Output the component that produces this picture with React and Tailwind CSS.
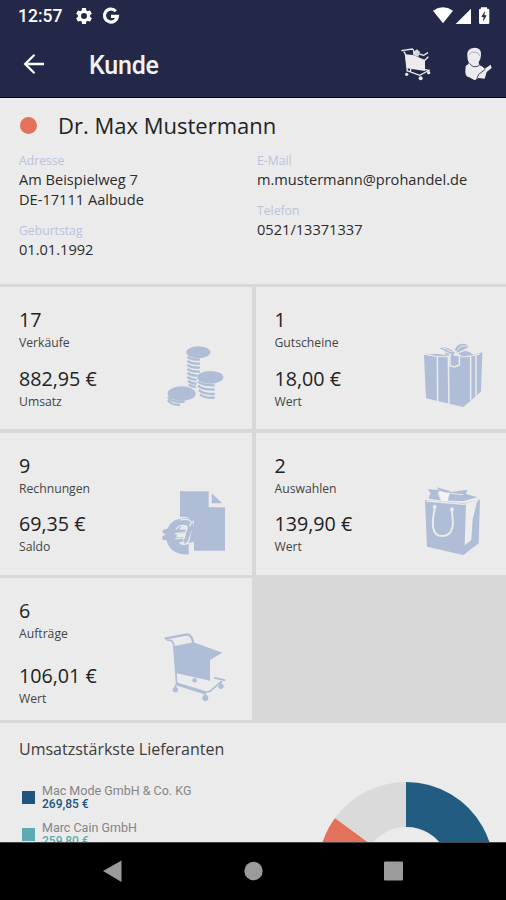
import React from 'react';

const customer = {
  name: 'Dr. Max Mustermann',
  street: 'Am Beispielweg 7',
  city: 'DE-17111 Aalbude',
  birthday: '01.01.1992',
  email: 'm.mustermann@prohandel.de',
  phone: '0521/13371337',
};

const suppliers = [
  { name: 'Mac Mode GmbH & Co. KG', value: '269,85 €', box: 'bg-[#1d5480]', text: 'text-[#1d5480]' },
  { name: 'Marc Cain GmbH', value: '259,80 €', box: 'bg-[#5cabb0]', text: 'text-[#5cabb0]' },
];

function CoinsIcon() {
  return (
    <svg viewBox="480 165 216 216" className="size-[72px]" fill="#afbdd6">
      <ellipse cx="595" cy="202" rx="36" ry="18" />
      <ellipse cx="631" cy="277" rx="39" ry="19" />
      <ellipse cx="545" cy="326" rx="42" ry="22" />
      <g fill="none" stroke="#afbdd6" strokeWidth="7">
        <path d="M562 216q14 9 38 8M562 228q14 9 38 8M562 240q14 9 38 8M562 252q14 9 38 8M562 264q12 9 31 8M562 276q12 9 28 8M564 288q10 8 26 8M566 299q9 7 22 7" />
        <path d="M594 290q14 12 50 11M594 302q14 13 50 12M596 315q14 13 48 12M600 328q14 12 44 10" />
        <path d="M504 336q8 17 50 14M504 345q10 16 36 14" />
      </g>
    </svg>
  );
}

function GiftIcon() {
  return (
    <svg viewBox="510 165 216 216" className="size-[72px]">
      <g fill="#afbdd6">
        <path d="M522 210L560 206L598 212L662 213L697 202L693 320L640 366L528 340Z" />
        <path d="M568 190Q590 182 614 202L610 214L584 208Q596 200 568 190Z" />
        <path d="M614 196Q620 172 648 177Q662 186 644 195L622 204Z" />
        <path d="M624 206Q644 192 662 203L672 210L640 214Z" />
      </g>
      <g fill="none" stroke="#ebebeb" strokeWidth="4.500">
        <path d="M562 213L563 350M595 216L597 358M662 216V346M678 209V334" />
        <path d="M530 210Q566 217 600 215M632 216Q660 217 690 207" strokeWidth="3" />
        <path d="M600 208V242L614 246L628 240V210" />
        <path d="M574 196L604 208M578 188L606 201M622 196Q632 178 652 184M624 204L650 190M608 200Q616 194 622 202" strokeWidth="3" />
      </g>
    </svg>
  );
}

function InvoiceIcon() {
  return (
    <svg viewBox="480 165 216 216" className="size-[72px]">
      <path d="M540 184H626V232H675V362H540Z" fill="#afbdd6" />
      <path d="M635 190L667 220H635Z" fill="#afbdd6" />
      <path d="M582 276Q550 250 518 274Q500 300 506 340Q530 384 580 366V338L566 342" fill="#ebebeb" stroke="#ebebeb" strokeWidth="4" />
      <path
        d="M580 268Q520 255 502 296L488 300V310L498 312L486 320L488 330L499 330Q512 376 566 373V342Q546 350 536 338L560 331L563 321L530 322V313L562 310L568 300L536 298Q548 282 570 288Z"
        fill="#afbdd6"
      />
      <path d="M562 290L576 270L580 290L562 336L552 342L556 316Z" fill="#afbdd6" />
      <path
        d="M540 270Q566 264 574 276L570 290M528 298Q542 280 560 290M524 311L558 308M526 326L556 324M562 292L550 330"
        fill="none"
        stroke="#ebebeb"
        strokeWidth="3.500"
      />
    </svg>
  );
}

function BagIcon() {
  return (
    <svg viewBox="510 165 216 216" className="size-[72px]">
      <g fill="#afbdd6">
        <path d="M525 210L642 220L690 207L686 340L640 375L531 350Z" />
        <path d="M534 177L570 181L563 189L572 211L536 206L541 190Z" />
        <path d="M598 187L652 179L648 192L682 202L642 213L594 212Z" />
        <path d="M560 172L602 184L590 190L566 181Z" />
      </g>
      <path d="M568 184L600 190L590 212L574 211Z" fill="#f4f4f4" />
      <path d="M648 221L682 212L668 268L664 330L644 346Z" fill="#ededed" />
      <g fill="none" stroke="#ebebeb">
        <path d="M529 213L642 223L688 209" strokeWidth="4" />
        <path d="M554 236C545 280 544 318 576 318C612 318 612 280 605 240" strokeWidth="6" />
        <path d="M602 190L640 194" strokeWidth="3" />
      </g>
      <circle cx="554" cy="231" r="6" fill="#ebebeb" />
      <circle cx="606" cy="238" r="6" fill="#ebebeb" />
    </svg>
  );
}

function OrderCartIcon() {
  return (
    <svg viewBox="480 165 216 216" className="size-[72px]">
      <path d="M520 211L580 199L667 230L630 252V314L527 291Z" fill="#afbdd6" />
      <g fill="none" stroke="#afbdd6" strokeWidth="5" strokeLinejoin="round">
        <path d="M494 188L562 175Q577 178 580 202" strokeWidth="7" />
        <path d="M500 192L514 194Q521 198 522 214L530 322" />
        <path d="M524 338L530 322L618 348L630 346L668 313M532 327L616 353M642 305L676 313M616 348V362M662 316V326" />
      </g>
      <g fill="#afbdd6">
        <circle cx="526" cy="341" r="8" />
        <circle cx="584" cy="313" r="7" />
        <circle cx="616" cy="366" r="9" />
        <circle cx="663" cy="331" r="8" />
      </g>
    </svg>
  );
}

// small cart in the app bar
function HeaderCartIcon() {
  return (
    <svg viewBox="438 135 102 108" className="h-9 w-[34px]">
      <path d="M456 163L480 165L516 180V213L462 205Z" fill="#ececee" />
      <path d="M480 156L492 148L501 156L496 171L482 166Z" fill="#d5d6dc" />
      <g fill="none" stroke="#ececee" strokeWidth="4">
        <path d="M445 152L478 147Q484 150 483 164M452 155Q459 160 459 178L463 214M499 162L512 166L525 158M514 182L526 170" />
        <path d="M462 212L500 226L530 210M504 206L530 212M473 206V216" />
      </g>
      <g fill="#ececee">
        <circle cx="461" cy="223" r="5" />
        <circle cx="503" cy="235" r="6" />
        <circle cx="527" cy="218" r="5" />
      </g>
    </svg>
  );
}

function HeaderUserIcon() {
  return (
    <svg viewBox="630 135 96 108" className="h-9 w-8">
      <path d="M646 168Q644 144 667 143Q690 144 687 166Q686 180 680 187L682 196Q692 198 698 206L716 194L719 204L704 216L698 236L680 234L668 241L652 232Q640 230 640 216L641 198Q649 193 651 188Q646 180 646 168Z" fill="#ececee" />
      <g fill="none" stroke="#232849" strokeWidth="2.500">
        <path d="M651 164Q658 154 670 156Q680 158 684 168" opacity="0.4" />
        <path d="M653 190Q662 206 681 197M700 208L680 223L674 238" />
      </g>
    </svg>
  );
}

function StatusIcons() {
  return (
    <svg viewBox="537 15 180 60" className="h-5 w-[60px]" fill="#fff">
      <path d="M540 29Q570 9 600 29L570 67Z" />
      <path d="M608 69L654 23V69Z" />
      <path d="M684 23V19H702V23H705Q709 23 709 27V65Q709 69 705 69H682Q678 69 678 65V27Q678 23 682 23Z" />
      <path d="M696 29L685 48H692L690 62L701 43H694Z" fill="#232849" />
    </svg>
  );
}

const tiles = [
  { count: '17', label: 'Verkäufe', amount: '882,95 €', unit: 'Umsatz', icon: <CoinsIcon /> },
  { count: '1', label: 'Gutscheine', amount: '18,00 €', unit: 'Wert', icon: <GiftIcon /> },
  { count: '9', label: 'Rechnungen', amount: '69,35 €', unit: 'Saldo', icon: <InvoiceIcon /> },
  { count: '2', label: 'Auswahlen', amount: '139,90 €', unit: 'Wert', icon: <BagIcon /> },
  { count: '6', label: 'Aufträge', amount: '106,01 €', unit: 'Wert', icon: <OrderCartIcon />, wide: true },
];

function Tile({ tile, right }) {
  return (
    <div className={`flex justify-between bg-[#ebebeb] ${right ? 'pl-[18.500px] pr-[14px]' : 'pl-[19px] pr-5'}`}>
      <div className="flex flex-col whitespace-nowrap pt-[21px] text-[#222]">
        <span className="text-[19.700px] leading-6">{tile.count}</span>
        <span className="mt-px text-[12.200px] leading-5 text-[#444]">{tile.label}</span>
        <span className={`text-[19.700px] leading-6 ${tile.wide ? 'mt-[19.500px]' : 'mt-[13.500px]'}`}>{tile.amount}</span>
        <span className="mt-px text-[12.200px] leading-5 text-[#444]">{tile.unit}</span>
      </div>
      <div className="pt-[52.500px]">{tile.icon}</div>
    </div>
  );
}

function Field({ label, children }) {
  return (
    <div>
      <div className="text-[12.200px] leading-[18px] text-[#b9c3dc]">{label}</div>
      <div className="-mt-px mb-px text-[14.600px] leading-5 text-[#2b2b2b]">{children}</div>
    </div>
  );
}

export default function App() {
  return (
    <div className="flex h-[900px] w-[506px] flex-col overflow-hidden bg-[#d8d8d8] font-['Open_Sans',sans-serif]">
      <header className="h-[98px] shrink-0 border-b border-black bg-[#232849] font-[Roboto,sans-serif] text-white">
        <div className="flex h-8 items-center pl-[18px] pr-[14px]">
          <span className="w-[45px] whitespace-nowrap text-[17.5px] font-medium leading-8">12:57</span>
          <svg viewBox="0 0 24 24" className="ml-[10.5px] size-[20px]" fill="#fff">
            <path d="M19.140 12.940c.04-.3.060-.61.060-.94 0-.32-.02-.64-.07-.94l2.030-1.580a.49.49 0 0 0 .12-.61l-1.920-3.320a.49.49 0 0 0-.59-.22l-2.390.96a7 7 0 0 0-1.620-.94l-.36-2.540a.48.48 0 0 0-.48-.41h-3.840a.48.48 0 0 0-.47.41l-.36 2.540a7.300 7.300 0 0 0-1.620.94l-2.390-.96a.48.48 0 0 0-.59.22L2.740 8.870a.48.48 0 0 0 .12.61l2.030 1.580a6 6 0 0 0 0 1.880l-2.030 1.580a.49.49 0 0 0-.12.610l1.920 3.320c.12.22.37.29.59.22l2.390-.96c.5.38 1.030.7 1.620.94l.36 2.540c.05.24.24.41.48.41h3.840c.24 0 .44-.17.47-.41l.36-2.540a7 7 0 0 0 1.620-.94l2.390.96c.22.08.47 0 .59-.22l1.920-3.320a.48.48 0 0 0-.12-.61zM12 15.600a3.600 3.600 0 1 1 0-7.200 3.600 3.600 0 0 1 0 7.200z" />
          </svg>
          <svg viewBox="0 0 18 18" className="ml-2 size-[18px]" fill="none" stroke="#fff" strokeWidth="3.200">
            <path d="M13.800 4.200A6.500 6.500 0 1 0 15.400 9.300H9" />
          </svg>
          <div className="ml-auto">
            <StatusIcons />
          </div>
        </div>
        <div className="flex h-[65px] items-center pl-[22px] pr-3">
          <svg viewBox="0 0 24 24" className="mb-px size-6" fill="none" stroke="#fff" strokeWidth="2.300">
            <path d="M22 12H3.500M12.500 2.800L3.200 12l9.300 9.200" />
          </svg>
          <h1 className="ml-[43px] mt-0.5 text-[25px] font-medium tracking-[-0.2px] text-[#f2f2f4]">Kunde</h1>
          <div className="mb-[3px] ml-auto flex items-center gap-[29px]">
            <HeaderCartIcon />
            <HeaderUserIcon />
          </div>
        </div>
      </header>

      <section className="h-[186px] shrink-0 bg-[#ebebeb] px-[19px] pt-[11px]">
        <div className="flex h-8 items-center">
          <span className="ml-px size-[17px] rounded-full bg-[#e2735a]" />
          <h2 className="ml-[21px] whitespace-nowrap text-[22px] text-[#222]">{customer.name}</h2>
        </div>
        <div className="mt-[11px] grid grid-cols-[238px_1fr]">
          <div className="flex flex-col gap-3">
            <Field label="Adresse">
              {customer.street}
              <br />
              {customer.city}
            </Field>
            <Field label="Geburtstag">{customer.birthday}</Field>
          </div>
          <div className="flex flex-col gap-3">
            <Field label="E-Mail">{customer.email}</Field>
            <Field label="Telefon">{customer.phone}</Field>
          </div>
        </div>
      </section>

      <section className="mt-[3px] grid shrink-0 auto-rows-[142px] grid-cols-[252px_250px] gap-x-1 gap-y-[3.500px]">
        {tiles.map((tile, i) => (
          <Tile key={tile.label} tile={tile} right={i % 2 === 1} />
        ))}
      </section>

      <section className="mt-[3px] flex min-h-0 flex-1 flex-col overflow-hidden bg-[#ebebeb]">
        <h3 className="ml-[19px] mt-3.5 text-[16px] leading-6 text-[#3c3c3c]">Umsatzstärkste Lieferanten</h3>
        <div className="flex justify-between pr-3 font-[Roboto,sans-serif]">
          <ul className="ml-[22px] mt-[23px] flex flex-col gap-[9px]">
            {suppliers.map((s) => (
              <li key={s.name} className="flex gap-[7px]">
                <span className={`mt-[7px] size-[13px] ${s.box}`} />
                <div className="whitespace-nowrap text-[12px] leading-[14px]">
                  <div className="text-[12.500px] text-[#858585]">{s.name}</div>
                  <div className={`-mt-px mb-px font-medium ${s.text}`}>{s.value}</div>
                </div>
              </li>
            ))}
          </ul>
          <svg viewBox="-88 -88 176 176" className="mt-[21px] size-[176px] shrink-0">
            <path d="M0 -88A88 88 0 0 1 75 46L37 23A43 43 0 0 0 0 -43Z" fill="#225c80" />
            <path d="M75 46A88 88 0 0 1 -75 46L-37 23A43 43 0 0 0 37 23Z" fill="#5cabb0" />
            <path d="M-75 46A88 88 0 0 1 -71 -52L-34.700 -25.400A43 43 0 0 0 -37 23Z" fill="#e2735a" />
            <path d="M-71 -52A88 88 0 0 1 0 -88V-43A43 43 0 0 0 -34.700 -25.400Z" fill="#dadada" />
          </svg>
        </div>
      </section>

      <nav className="h-[58px] shrink-0 border-t border-[#444] bg-black">
        <svg viewBox="0 0 506 58" className="h-[58px] w-full" fill="#9b9b9b">
          <path d="M103 28L121.500 17.500V39Z" />
          <circle cx="253.500" cy="28" r="9.200" />
          <rect x="384" y="18.500" width="19" height="19" rx="1" />
        </svg>
      </nav>
    </div>
  );
}
